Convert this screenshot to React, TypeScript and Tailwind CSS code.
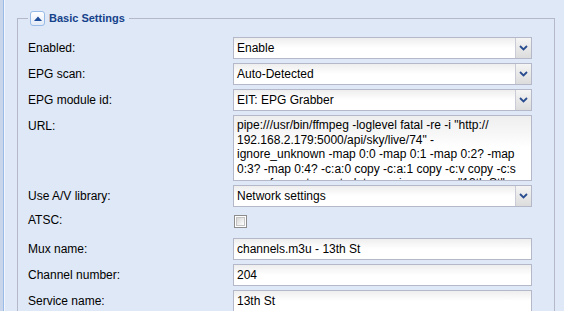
import React from 'react'

const font = { fontFamily: '"Liberation Sans", Arial, sans-serif' }

interface Row {
  label: string
  kind: 'combo' | 'text' | 'check' | 'area'
  value?: string
}

const urlLines = [
  'pipe:///usr/bin/ffmpeg -loglevel fatal -re -i "http://',
  '192.168.2.179:5000/api/sky/live/74" -',
  'ignore_unknown -map 0:0 -map 0:1 -map 0:2? -map',
  '0:3? -map 0:4? -c:a:0 copy -c:a:1 copy -c:v copy -c:s',
  'copy -f mpegts -metadata service_name="13th St"',
]

const rows: Row[] = [
  { label: 'Enabled:', kind: 'combo', value: 'Enable' },
  { label: 'EPG scan:', kind: 'combo', value: 'Auto-Detected' },
  { label: 'EPG module id:', kind: 'combo', value: 'EIT: EPG Grabber' },
  { label: 'URL:', kind: 'area', value: urlLines.join('\n') },
  { label: 'Use A/V library:', kind: 'combo', value: 'Network settings' },
  { label: 'ATSC:', kind: 'check' },
  { label: 'Mux name:', kind: 'text', value: 'channels.m3u - 13th St' },
  { label: 'Channel number:', kind: 'text', value: '204' },
  { label: 'Service name:', kind: 'text', value: '13th St' },
]

function Chevron() {
  return (
    <svg width="9" height="6" viewBox="0 0 9 6">
      <path d="M1 1 L4.5 4.5 L8 1" fill="none" stroke="#2a4d8f" strokeWidth="1.8" />
    </svg>
  )
}

function Combo({ value }: { value: string }) {
  return (
    <div className="flex h-[22px] w-[299px] border border-[#b5b8c8] bg-gradient-to-b from-[#eeeeee] via-white to-white">
      <div className="flex-1 pl-[3px] text-[12px] leading-[20px] text-black truncate">{value}</div>
      <div className="flex w-[16px] items-center justify-center border-l border-[#c9ccd6] bg-gradient-to-b from-[#f5f5f5] to-[#dcdcdc]">
        <Chevron />
      </div>
    </div>
  )
}

function TextBox({ value }: { value: string }) {
  return (
    <div className="h-[22px] w-[299px] border border-[#b5b8c8] bg-gradient-to-b from-[#eeeeee] via-white to-white pl-[3px] text-[12px] leading-[20px] text-black">
      {value}
    </div>
  )
}

function CheckBox() {
  return (
    <div className="ml-[1px] mt-[4px] h-[13px] w-[13px] border border-[#8c8c8c] bg-white p-[1px]">
      <div className="h-full w-full border border-[#c4c4c4] bg-gradient-to-br from-[#d6d6d6] to-white" />
    </div>
  )
}

export default function App() {
  return (
    <div className="flex h-[311px] w-[564px] overflow-hidden bg-[#dfe8f6]" style={font}>
      <div className="h-full w-[3px] bg-[#c8d5ea]" />
      <div className="h-full w-[1px] bg-[#99bbe8]" />
      <div className="h-full w-[1px] bg-[#f2f6fc]" />
      <div className="flex-1 pl-[12px]">
        <fieldset className="mt-[11px] w-[538px] border border-[#b5b8c8] pl-[10px] pt-[11px]">
          <legend className="flex h-[15px] items-center px-[2px]">
            <span className="flex h-[15px] w-[15px] items-center justify-center rounded-[3px] border border-[#99bbe8] bg-gradient-to-b from-white to-[#e3ebf7]">
              <svg width="8" height="5" viewBox="0 0 8 5">
                <path d="M0 5 L4 0.5 L8 5 Z" fill="#1d4c9a" />
              </svg>
            </span>
            <span className="ml-[4px] pr-[2px] text-[11px] font-bold leading-[15px] text-[#15428b]">Basic Settings</span>
          </legend>
          <div className="grid grid-cols-[205px_299px] gap-y-[4px]">
            {rows.map((row) => (
              <React.Fragment key={row.label}>
                <div className={`text-[12px] text-black ${row.kind === 'check' ? 'leading-[19px]' : 'leading-[22px]'}`}>
                  {row.label}
                </div>
                <div>
                  {row.kind === 'combo' && <Combo value={row.value ?? ''} />}
                  {row.kind === 'text' && <TextBox value={row.value ?? ''} />}
                  {row.kind === 'check' && (
                    <div className="h-[19px]">
                      <CheckBox />
                    </div>
                  )}
                  {row.kind === 'area' && (
                    <textarea
                      readOnly
                      wrap="off"
                      value={row.value}
                      className="block h-[66px] w-[299px] resize-none overflow-hidden whitespace-pre border border-[#b5b8c8] bg-gradient-to-b from-[#eeeeee] via-white to-white px-[3px] pt-[2px] text-[12px] leading-[14.5px] text-black outline-none"
                      style={font}
                    />
                  )}
                </div>
              </React.Fragment>
            ))}
          </div>
        </fieldset>
      </div>
    </div>
  )
}
